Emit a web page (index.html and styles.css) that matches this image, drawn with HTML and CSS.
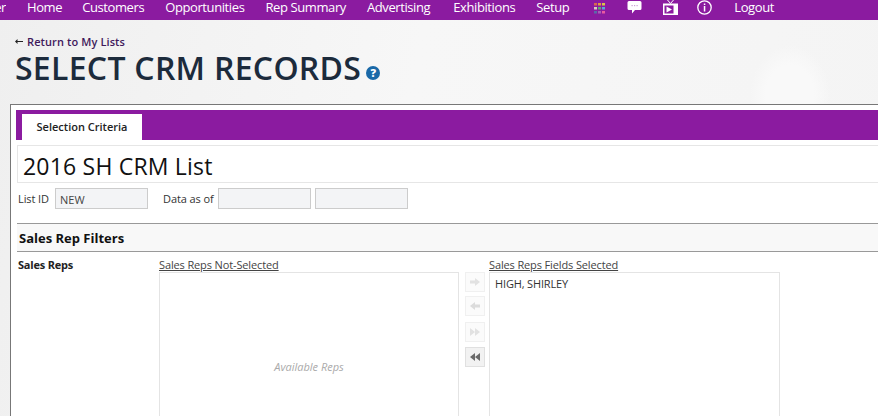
FILE: index.html
```html
<!DOCTYPE html>
<html lang="en">
<head>
<meta charset="utf-8">
<title>Select CRM Records</title>
<link rel="stylesheet" href="styles.css">
</head>
<body>
<nav class="nav">
  <a class="nav-item clip">er</a>
  <a class="nav-item">Home</a>
  <a class="nav-item tight">Customers</a>
  <a class="nav-item">Opportunities</a>
  <a class="nav-item">Rep Summary</a>
  <a class="nav-item">Advertising</a>
  <a class="nav-item wide">Exhibitions</a>
  <a class="nav-item">Setup</a>
  <span class="nav-icon grid-ic">
    <svg width="11" height="11" viewBox="0 0 11 11">
      <rect x="0" y="0" width="3" height="2.5" fill="#d9694f"/><rect x="4" y="0" width="3" height="2.5" fill="#e0a040"/><rect x="8" y="0" width="3" height="2.5" fill="#d8c548"/>
      <rect x="0" y="4" width="3" height="2.5" fill="#d8d0c0"/><rect x="4" y="4" width="3" height="2.5" fill="#58b070"/><rect x="8" y="4" width="3" height="2.5" fill="#58a8d8"/>
      <rect x="0" y="8" width="3" height="2.5" fill="#5a6aa8"/><rect x="4" y="8" width="3" height="2.5" fill="#a860b8"/><rect x="8" y="8" width="3" height="2.5" fill="#e85aa0"/>
    </svg>
  </span>
  <span class="nav-icon chat-ic">
    <svg width="15" height="14" viewBox="0 0 15 14">
      <path d="M2 1h11a1.500 1.500 0 0 1 1.500 1.500v6A1.500 1.500 0 0 1 13 10H8l-3 3.500V10H2A1.500 1.500 0 0 1 .5 8.500v-6A1.500 1.500 0 0 1 2 1z" fill="#fff"/>
      <rect x="4.500" y="5" width="1.200" height="1.200" fill="#c9a0d4"/><rect x="7" y="5" width="1.200" height="1.200" fill="#c9a0d4"/><rect x="9.500" y="5" width="1.200" height="1.200" fill="#c9a0d4"/>
    </svg>
  </span>
  <span class="nav-icon tv-ic">
    <svg width="15" height="15" viewBox="0 0 15 15">
      <path d="M4.500 0l3 3.500L10.500 0" fill="none" stroke="#fff" stroke-width="1"/>
      <rect x="0" y="3.500" width="15" height="11.500" fill="#fff"/>
      <rect x="1.500" y="5.500" width="9" height="8" fill="#8b1ba0"/>
      <path d="M3.500 6.500l5.500 3-5.500 3z" fill="#fff"/>
    </svg>
  </span>
  <span class="nav-icon info-ic">
    <svg width="15" height="15" viewBox="0 0 15 15">
      <circle cx="7.500" cy="7.500" r="6.700" fill="none" stroke="#fff" stroke-width="1.300"/>
      <rect x="6.800" y="3.500" width="1.500" height="1.500" fill="#fff"/>
      <rect x="6.800" y="6" width="1.500" height="5.500" fill="#fff"/>
    </svg>
  </span>
  <a class="nav-item logout">Logout</a>
</nav>

<header class="page-head">
  <a class="back">
    <svg class="back-arrow" width="8" height="5" viewBox="0 0 8 5"><path d="M0 2.500L2.500 0v2h5.500v1H2.500v2z" fill="#222"/></svg>
    <span>Return to My Lists</span>
  </a>
  <h1 class="page-title">SELECT CRM RECORDS<span class="help">?</span></h1>
</header>

<main class="panel">
  <div class="tabs">
    <div class="tab">Selection Criteria</div>
  </div>
  <div class="list-name">2016 SH CRM List</div>
  <div class="meta">
    <span class="meta-label">List ID</span>
    <div class="field">NEW</div>
    <span class="meta-label data-as">Data as of</span>
    <div class="field"></div>
    <div class="field"></div>
  </div>
  <h2 class="section">Sales Rep Filters</h2>
  <div class="picker">
    <div class="picker-label">Sales Reps</div>
    <div class="col">
      <div class="col-title">Sales Reps Not-Selected</div>
      <div class="listbox empty"><span>Available Reps</span></div>
    </div>
    <div class="moves">
      <button class="move">
        <svg width="12" height="10" viewBox="0 0 12 10"><path d="M1 3.500h5V1l5 4-5 4V6.500H1z" fill="#e2e2e2"/></svg>
      </button>
      <button class="move">
        <svg width="12" height="10" viewBox="0 0 12 10"><path d="M11 3.500H6V1L1 5l5 4V6.500h5z" fill="#dcdcdc"/></svg>
      </button>
      <button class="move third">
        <svg width="12" height="10" viewBox="0 0 12 10"><path d="M1 1l5 4-5 4zM6 1l5 4-5 4z" fill="#e2e2e2"/></svg>
      </button>
      <button class="move on">
        <svg width="12" height="10" viewBox="0 0 12 10"><path d="M11 1L6 5l5 4zM6 1L1 5l5 4z" fill="#6a6a6a"/></svg>
      </button>
    </div>
    <div class="col">
      <div class="col-title">Sales Reps Fields Selected</div>
      <div class="listbox"><div class="rep">HIGH, SHIRLEY</div></div>
    </div>
  </div>
</main>
</body>
</html>
```
FILE: styles.css
```css
* { box-sizing: border-box; }
html, body { margin: 0; height: 416px; overflow: hidden; }
body {
  font-family: "Open Sans", "Noto Sans", sans-serif;
  color: #222;
  background:
    radial-gradient(ellipse 40px 50px at 790px 95px, #f9f9f9 60%, rgba(249,249,249,0) 100%),
    linear-gradient(100deg, #efefef 0%, #f7f7f7 45%, #f4f4f4 100%);
}
.nav {
  display: flex;
  align-items: center;
  height: 20px;
  background: #8b1ba0;
  color: #fff;
  font-size: 13px;
  white-space: nowrap;
  overflow: hidden;
}
.nav-item { display: block; line-height: 14px; margin-top: -6px; margin-left: 21px; letter-spacing: -0.4px; }
.nav-item.clip { margin-left: 0; width: 6px; direction: rtl; overflow: hidden; }
.nav-item.tight { margin-left: 20px; }
.nav-item.wide { margin-left: 23px; }
.nav-item.logout { margin-left: 22px; }
.nav-icon { display: block; margin-top: -5px; height: 15px; }
.grid-ic { margin-left: 25px; margin-top: -6px; }
.chat-ic { margin-left: 22px; }
.tv-ic { margin-left: 21px; }
.info-ic { margin-left: 19px; }
.page-head { height: 84px; padding: 14px 15px 0; }
.back { display: flex; align-items: center; color: #3f1a5c; font-size: 11px; font-weight: 600; line-height: 15px; letter-spacing: 0.1px; }
.back-arrow { margin-right: 4px; }
.page-title {
  margin: 0;
  font-size: 32px;
  font-weight: 600;
  line-height: 38px;
  color: #1c2b3c;
  letter-spacing: 0.28px;
}
.help {
  display: inline-block;
  width: 14px;
  height: 14px;
  margin-left: 5px;
  border-radius: 50%;
  background: #1a69a8;
  color: #fff;
  font-size: 11px;
  font-weight: 800;
  line-height: 14px;
  letter-spacing: 0;
  text-align: center;
  vertical-align: 3px;
}
.panel {
  height: 400px;
  margin-left: 10px;
  padding: 5px 0 0 5px;
  background: #fff;
  border: 1px solid #777;
  border-right: 0;
}
.tabs {
  display: flex;
  align-items: flex-end;
  height: 30px;
  padding-left: 6px;
  background: #8b1ba0;
}
.tab {
  width: 120px;
  height: 26px;
  background: #fff;
  color: #222;
  font-size: 11px;
  font-weight: 600;
  line-height: 26px;
  text-align: center;
}
.list-name {
  height: 38px;
  margin: 5px 0 0 1px;
  padding-left: 5px;
  border: 1px solid #e6e6e6;
  border-right: 0;
  font-size: 23px;
  line-height: 40px;
  letter-spacing: 0.2px;
  color: #111;
}
.meta {
  display: flex;
  align-items: center;
  height: 22px;
  margin: 4px 0 0 2px;
  font-size: 11px;
  color: #333;
}
.meta-label { width: 37px; letter-spacing: -0.1px; }
.meta-label.data-as { width: 55px; margin-left: 11px; }
.field {
  width: 93px;
  height: 21px;
  margin-right: 4px;
  padding-left: 4px;
  background: #f3f4f6;
  border: 1px solid #ccc;
  font-size: 11px;
  line-height: 21px;
  color: #444;
}
.section {
  height: 29px;
  margin: 14px 0 0 1px;
  padding-left: 2px;
  background: #f8f8f8;
  border-top: 1px solid #999;
  border-bottom: 1px solid #999;
  font-size: 13px;
  font-weight: 700;
  line-height: 28px;
  color: #111;
}
.picker { display: flex; margin: 6px 0 0 2px; }
.picker-label { width: 141px; font-size: 11px; font-weight: 700; line-height: 13px; letter-spacing: -0.2px; color: #222; }
.col-title { font-size: 11px; line-height: 14px; text-decoration: underline; letter-spacing: -0.13px; color: #444; }
.col { display: flex; flex-direction: column; }
.listbox { width: 300px; height: 300px; background: #fff; border: 1px solid #e4e4e4; }
.col:last-child .listbox { width: 291px; }
.listbox.empty { position: relative; }
.listbox.empty span {
  position: absolute;
  left: 0;
  right: 0;
  top: 86px;
  font-size: 11px;
  font-style: italic;
  color: #aaa;
  text-align: center;
}
.rep { padding: 4px 0 0 5px; font-size: 11px; line-height: 14px; letter-spacing: -0.15px; color: #333; }
.moves { display: flex; flex-direction: column; gap: 4px; width: 30px; padding: 14px 0 0 6px; }
.move {
  display: flex;
  align-items: center;
  justify-content: center;
  width: 20px;
  height: 20px;
  padding: 0;
  background: #fbfbfb;
  border: 1px solid #f0f0f0;
}
.move.third { margin-top: 2px; }
.move.on { margin-top: 1px; background: #f2f2f2; border-color: #e0e0e0; }
```
